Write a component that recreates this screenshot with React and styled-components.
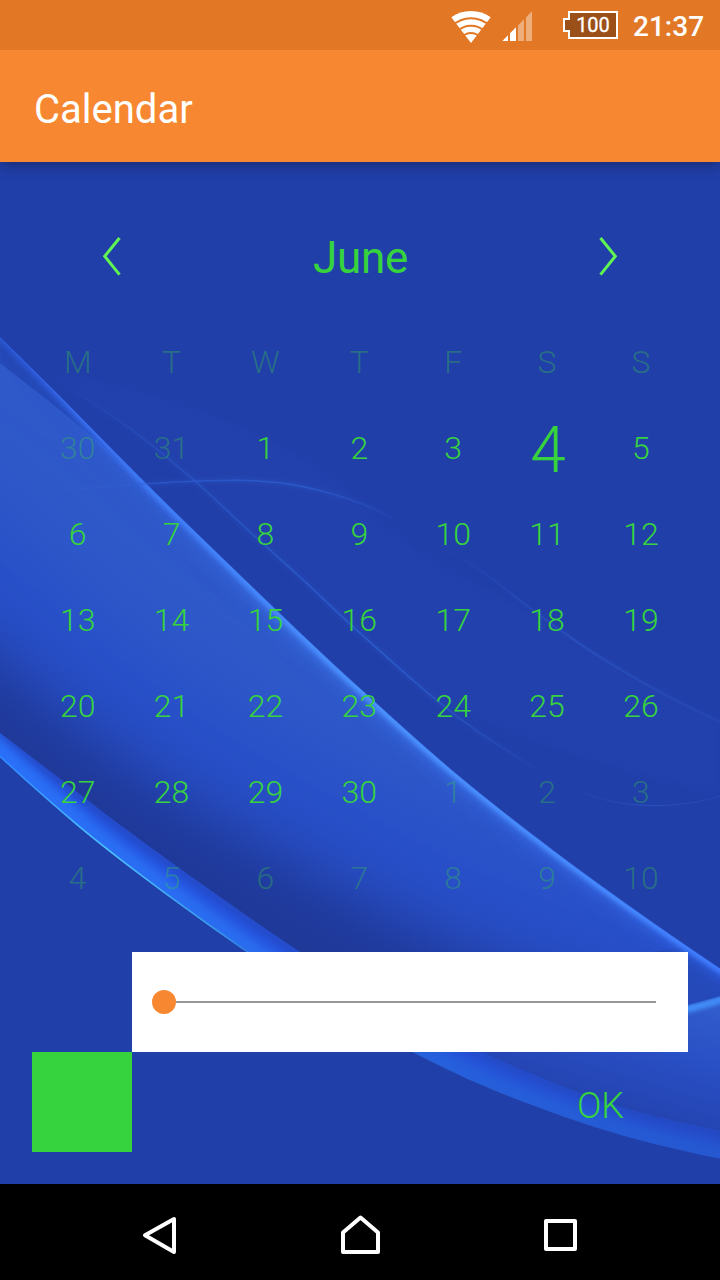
import React from "react";
import styled, { createGlobalStyle } from "styled-components";

const green = "#37d33e";

const GlobalStyle = createGlobalStyle`
  *, *::before, *::after { box-sizing: border-box; }
  body { margin: 0; background: #213fa9; }
  button { padding: 0; border: 0; background: none; color: inherit; font: inherit; }
  svg { display: block; }
`;

const Screen = styled.div`
  width: 720px;
  height: 1280px;
  display: flex;
  flex-direction: column;
  overflow: hidden;
  font-family: Roboto, "Liberation Sans", sans-serif;
`;

const StatusBar = styled.header`
  flex: 0 0 50px;
  display: flex;
  align-items: center;
  justify-content: flex-end;
  padding-right: 16px;
  background: #e27826;
  color: #fff;
  z-index: 2;
`;

const SignalIcons = styled.svg`
  width: 84px;
  height: 34px;
  margin-right: 28px;
  margin-top: 4px;
`;

const Battery = styled.div`
  position: relative;
  display: flex;
  align-items: center;
  justify-content: center;
  width: 55px;
  height: 28px;
  padding-left: 5px;
  margin-right: 15px;
  font-size: 20px;
  line-height: 28px;
`;

const BatteryOutline = styled.svg`
  position: absolute;
  inset: 0;
  z-index: 0;
`;

const BatteryLevel = styled.span`
  position: relative;
  -webkit-text-stroke: 0.3px #fff;
`;

const Clock = styled.span`
  font-size: 28px;
  line-height: 34px;
  font-weight: 500;
  width: 71px;
  margin-top: 3px;
  white-space: nowrap;
`;

const AppBar = styled.div`
  flex: 0 0 112px;
  display: flex;
  align-items: center;
  padding: 8px 34px 0 34px;
  background: #f78831;
  box-shadow: 0 2px 14px rgba(0, 0, 0, 0.36);
  z-index: 1;
`;

const Title = styled.h1`
  margin: 0;
  color: #fff;
  font-size: 40px;
  line-height: 48px;
  font-weight: 400;
`;

const Main = styled.main`
  position: relative;
  flex: 0 0 1022px;
  display: flex;
  flex-direction: column;
  padding: 32px;
  background: #213fa9;
  color: ${green};
`;

const WallpaperSvg = styled.svg`
  position: absolute;
  inset: 0;
`;

const MonthBar = styled.div`
  position: relative;
  flex: 0 0 125px;
  display: flex;
  align-items: center;
  justify-content: space-between;
  padding: 0 64px;
`;

const ArrowButton = styled.button`
  width: 32px;
  height: 44px;
  padding-bottom: 2px;
  display: flex;
  align-items: center;
  justify-content: center;
`;

const MonthName = styled.h2`
  margin: 2px 0 0 1px;
  font-size: 44px;
  line-height: 52px;
  font-weight: 400;
  letter-spacing: -0.3px;
`;

const DayGrid = styled.div`
  position: relative;
  flex: 0 0 602px;
  width: 657px;
  margin-left: -1.2px;
  display: grid;
  grid-template-columns: repeat(7, 1fr);
  grid-auto-rows: 86px;
`;

const DayCell = styled.div`
  display: flex;
  align-items: center;
  justify-content: center;
  padding: ${(p) => (p.$selected ? "6px 0 0 2px" : 0)};
  font-size: ${(p) => (p.$selected ? 64 : 32)}px;
  font-weight: 300;
  line-height: 1;
  opacity: ${(p) => (p.$dim ? 0.32 : 1)};
`;

const SliderPanel = styled.div`
  position: relative;
  flex: 0 0 100px;
  margin: 31px 0 0 100px;
  padding: 0 32px 0 20px;
  background: #fff;
  display: flex;
  align-items: center;
`;

const Thumb = styled.span`
  flex: 0 0 24px;
  height: 24px;
  border-radius: 50%;
  background: #f78831;
`;

const Track = styled.span`
  flex: 1;
  height: 2px;
  background: #969696;
`;

const Footer = styled.div`
  position: relative;
  flex: 0 0 100px;
  display: flex;
  justify-content: space-between;
`;

const Swatch = styled.div`
  width: 100px;
  background: ${green};
`;

const OkButton = styled.button`
  width: 176px;
  padding: 7px 0 0 1px;
  font-size: 36px;
  font-weight: 300;
`;

const NavBar = styled.nav`
  flex: 0 0 96px;
  display: flex;
  justify-content: center;
  background: #000;
`;

const NavButton = styled.button`
  width: 200px;
  display: flex;
  align-items: center;
  justify-content: center;
  padding-top: 6px;
`;

// Smooth curve through a list of points.
const curve = (pts, start = "M") => {
  let d = `${start}${pts[0][0]} ${pts[0][1]}`;
  for (let i = 0; i < pts.length - 1; i++) {
    const p0 = pts[i - 1] || pts[i];
    const p1 = pts[i];
    const p2 = pts[i + 1];
    const p3 = pts[i + 2] || p2;
    d += ` C${p1[0] + (p2[0] - p0[0]) / 6} ${p1[1] + (p2[1] - p0[1]) / 6}`;
    d += ` ${p2[0] - (p3[0] - p1[0]) / 6} ${p2[1] - (p3[1] - p1[1]) / 6} ${p2[0]} ${p2[1]}`;
  }
  return d;
};

const crest = [[-60, 279], [0, 338], [60, 397], [143, 481], [200, 537], [306, 639], [360, 689], [457, 775], [552, 850], [640, 914], [720, 969], [780, 1008]];
const rimTop = [[-60, 686], [0, 733], [60, 779], [120, 825], [200, 883], [300, 952], [390, 1006], [482, 1052], [547, 1080], [620, 1107], [720, 1131], [790, 1144]];
const rimBottom = [[-50, 710], [0, 757], [50, 802], [100, 844], [167, 895], [247, 952], [330, 1007], [413, 1052], [475, 1082], [535, 1106], [595, 1127], [655, 1144], [720, 1158.5], [790, 1170]];
const midTone = [[-100, 450], [0, 520], [130, 635], [300, 745], [500, 840], [760, 940]];
const darkTone = [[-100, 585], [0, 657], [80, 724], [170, 788], [300, 864], [450, 942], [640, 1010], [800, 1050]];
const threadA = [[50, 377], [93, 403], [140, 436], [195, 481], [250, 532], [300, 577], [360, 633], [435, 699], [480, 733], [550, 778]];
const threadB = [[40, 492], [90, 488], [143, 484], [200, 481], [250, 480.5], [300, 486], [360, 503], [412, 528]];
const threadC = [[440, 545], [480, 570], [530, 608], [560, 630], [600, 657], [660, 692], [722, 723]];
const threadD = [[570, 788], [610, 801], [650, 805.5], [690, 803], [722, 796]];
const veil = [[60, 374], [130, 388], [200, 410], [270, 440], [330, 475], [380, 520], [440, 565], [530, 612]];

const reversed = (pts) => [...pts].reverse();
const sheetPath = `${curve(crest)} ${curve(reversed(rimTop), "L")}Z`;
const rimPath = `${curve(rimTop)} ${curve(reversed(rimBottom), "L")}Z`;

const Fade = ({ id, x1, x2, stops }) => (
  <linearGradient id={id} gradientUnits="userSpaceOnUse" x1={x1} x2={x2} y1="0" y2="0">
    {stops.map(([offset, color, opacity = 1]) => (
      <stop key={offset} offset={offset} stopColor={color} stopOpacity={opacity} />
    ))}
  </linearGradient>
);

const Blur = ({ id, amount }) => (
  <filter id={id} filterUnits="userSpaceOnUse" x="-200" y="100" width="1120" height="1400" colorInterpolationFilters="sRGB">
    <feGaussianBlur stdDeviation={amount} />
  </filter>
);

const Wallpaper = () => (
  <WallpaperSvg width="720" height="1022" viewBox="0 162 720 1022" fill="none" aria-hidden="true">
    <defs>
      <clipPath id="sheet"><path d={sheetPath} /></clipPath>
      <clipPath id="rim"><path d={rimPath} /></clipPath>
      <Fade id="crestGlow" x1="0" x2="720" stops={[[0, "#2f62f0", 0], [0.15, "#3a6cf0", 0.4], [0.4, "#4280f6"], [0.85, "#3c70f0"], [1, "#3265f0"]]} />
      <Fade id="crestLine" x1="0" x2="720" stops={[[0, "#3468f8", 0.3], [0.2, "#4080ff", 0.9], [0.5, "#4c94ff"], [0.85, "#478cff"], [1, "#3f7cff"]]} />
      <Fade id="crestEdge" x1="0" x2="720" stops={[[0, "#3468f8"], [0.2, "#4080ff"], [0.5, "#4c94ff"], [1, "#3f7cff"]]} />
      <Fade id="rimFill" x1="0" x2="720" stops={[[0, "#2454e0"], [0.45, "#2654e0"], [0.7, "#2552d8"], [1, "#264dcc"]]} />
      <Fade id="rimGlow" x1="0" x2="720" stops={[[0, "#2a70f8"], [0.35, "#2a6cee"], [0.6, "#2660dc"], [1, "#2558d0"]]} />
      <Fade id="rimEdge" x1="0" x2="720" stops={[[0, "#2f88ff"], [0.15, "#4cc4ff"], [0.3, "#3a98e8"], [0.4, "#2a68d0", 0.5], [1, "#2658cc", 0]]} />
      <Fade id="fadeA" x1="50" x2="550" stops={[[0, "#2b5ccc", 0], [0.3, "#2b5ccc", 0.65], [0.65, "#2b60d0", 0.9], [0.8, "#2b5ccc", 0.7], [1, "#2b5ccc", 0]]} />
      <Fade id="fadeB" x1="40" x2="412" stops={[[0, "#3564d4", 0], [0.35, "#2c5cd0", 0.7], [0.7, "#2c5ccc", 0.9], [1, "#2b58c8", 0]]} />
      <Fade id="fadeC" x1="440" x2="720" stops={[[0, "#2a55c4", 0], [0.5, "#2a55c4", 0.8], [1, "#2a55c4", 0.35]]} />
      <Fade id="fadeD" x1="570" x2="720" stops={[[0, "#2a55c4", 0], [0.5, "#2a55c4", 0.8], [1, "#2a55c4", 0.4]]} />
      <linearGradient id="foldFill" gradientUnits="userSpaceOnUse" x1="690" x2="655" y1="1000" y2="1115">
        <stop offset="0" stopColor="#315ccc" />
        <stop offset="0.5" stopColor="#294fc4" />
        <stop offset="1" stopColor="#2444b2" />
      </linearGradient>
      <Blur id="blur1" amount="0.7" />
      <Blur id="blur2" amount="2" />
      <Blur id="blur5" amount="5" />
      <Blur id="blur10" amount="10" />
      <Blur id="blur30" amount="30" />
      <Blur id="blur36" amount="36" />
    </defs>

    <path d={`${curve(veil)} L600 655 L660 690 L720 722 L720 795 L640 775 L560 750 L480 720 ${curve(reversed(threadA.slice(0, 8)), "L")}Z`} fill="#2341ac" filter="url(#blur5)" />
    <path d={curve(threadA)} stroke="url(#fadeA)" strokeWidth="5" opacity="0.3" filter="url(#blur2)" />
    <path d={curve(threadA)} stroke="url(#fadeA)" strokeWidth="1.4" />
    <path d={curve(threadC)} stroke="url(#fadeC)" strokeWidth="4" opacity="0.3" filter="url(#blur1)" />
    <path d={curve(threadC)} stroke="url(#fadeC)" strokeWidth="1.1" />
    <path d={curve(threadD)} stroke="url(#fadeD)" strokeWidth="1.2" />

    <path d={sheetPath} fill="#2f59c9" />
    <g clipPath="url(#sheet)">
      <path d={`${curve(midTone)} V1350 H-100Z`} fill="#284fc8" filter="url(#blur36)" />
      <path d={`${curve(darkTone)} V1350 H-100Z`} fill="#1f3999" filter="url(#blur30)" />
      <path d="M-5 330 L-5 359 L50 402 L100 443 L145 488 Z" fill="#2549b6" />
      <path d="M400 1052 L560 1030 Q680 1012 730 994 L740 1170 L440 1130Z" fill="url(#foldFill)" />
      <path d="M600 1028 Q680 1013 730 997" stroke="#4390fa" strokeWidth="7" filter="url(#blur2)" />
      <path d="M600 1023 Q680 1009 730 993 V940 L600 960Z" fill="#2549b8" />
      <path d={curve(crest)} stroke="url(#crestGlow)" strokeWidth="22" filter="url(#blur10)" opacity="0.3" />
      <path d={curve(crest)} stroke="url(#crestGlow)" strokeWidth="14" filter="url(#blur5)" opacity="0.5" />
      <path d={curve(crest)} stroke="url(#crestLine)" strokeWidth="8" filter="url(#blur2)" />
    </g>
    <path d={curve(crest)} stroke="url(#crestEdge)" strokeWidth="1.2" opacity="0.6" />

    <path d={rimPath} fill="url(#rimFill)" />
    <g clipPath="url(#rim)">
      <path d={curve(rimTop)} stroke="#2448c0" strokeWidth="9" filter="url(#blur5)" />
      <path d={curve(rimBottom)} stroke="url(#rimGlow)" strokeWidth="28" filter="url(#blur5)" />
      <path d={curve(rimBottom)} stroke="url(#rimEdge)" strokeWidth="2.4" filter="url(#blur1)" />
    </g>
    <path d={curve(rimBottom)} stroke="url(#rimEdge)" strokeWidth="0.8" />

    <path d={curve(threadB)} stroke="url(#fadeB)" strokeWidth="5" opacity="0.35" filter="url(#blur2)" />
    <path d={curve(threadB)} stroke="url(#fadeB)" strokeWidth="1.4" />
  </WallpaperSvg>
);

const Chevron = ({ d }) => (
  <svg width="20" height="40" viewBox="0 0 20 40" fill="none" stroke="#5ff552" strokeWidth="3" strokeLinejoin="miter">
    <path d={d} />
  </svg>
);

const NavIcon = ({ children }) => (
  <svg width="48" height="48" viewBox="0 0 48 48" fill="none" stroke="#fff" strokeWidth="4" strokeLinejoin="round">
    {children}
  </svg>
);

const weekdays = ["M", "T", "W", "T", "F", "S", "S"];
const days = [
  { day: 30, dim: true },
  { day: 31, dim: true },
  ...Array.from({ length: 30 }, (_, i) => ({ day: i + 1, selected: i === 3 })),
  ...Array.from({ length: 10 }, (_, i) => ({ day: i + 1, dim: true })),
];

export default function App() {
  return (
    <Screen>
      <GlobalStyle />
      <StatusBar>
        <SignalIcons viewBox="451 10 84 34">
          <path d="M471 43 L451.3 17.3 A34 34 0 0 1 490.7 17.3Z" fill="#fff" />
          <g fill="none" stroke="#e27826" strokeWidth="1.9">
            <circle cx="471" cy="45" r="26.8" />
            <circle cx="471" cy="45" r="19.3" />
            <circle cx="471" cy="45" r="12" />
          </g>
          <path d="M502.3 41 L508 35.3 V41Z M510 41 V33.3 L516 27.3 V41Z" fill="#fff" />
          <path d="M518 41 V25.3 L524 19.3 V41Z M526 41 V17.3 L532 11.3 V41Z" fill="#fff" opacity="0.4" />
        </SignalIcons>
        <Battery>
          <BatteryOutline width="55" height="28" viewBox="0 0 55 28">
            <path d="M6 1 H54 V27 H6 V20 H1 V8 H6Z" fill="#9c5019" stroke="#fff" strokeWidth="2" />
          </BatteryOutline>
          <BatteryLevel>100</BatteryLevel>
        </Battery>
        <Clock>21:37</Clock>
      </StatusBar>

      <AppBar>
        <Title>Calendar</Title>
      </AppBar>

      <Main>
        <Wallpaper />
        <MonthBar>
          <ArrowButton aria-label="Previous month">
            <Chevron d="M17.5 2 L2.7 20.3 L17.5 38.6" />
          </ArrowButton>
          <MonthName>June</MonthName>
          <ArrowButton aria-label="Next month">
            <Chevron d="M2.5 2 L17.3 20.3 L2.5 38.6" />
          </ArrowButton>
        </MonthBar>
        <DayGrid>
          {weekdays.map((name, i) => (
            <DayCell key={`w${i}`} $dim>{name}</DayCell>
          ))}
          {days.map(({ day, dim, selected }, i) => (
            <DayCell key={i} $dim={dim} $selected={selected}>{day}</DayCell>
          ))}
        </DayGrid>
        <SliderPanel>
          <Thumb />
          <Track />
        </SliderPanel>
        <Footer>
          <Swatch />
          <OkButton>OK</OkButton>
        </Footer>
      </Main>

      <NavBar>
        <NavButton aria-label="Back">
          <NavIcon><path d="M9 24.3 L38 8 V41Z" /></NavIcon>
        </NavButton>
        <NavButton aria-label="Home">
          <NavIcon><path d="M24.5 6.5 L42 21.5 V41 H7 V21.5Z" /></NavIcon>
        </NavButton>
        <NavButton aria-label="Recent apps">
          <NavIcon><rect x="10" y="10" width="29" height="28" /></NavIcon>
        </NavButton>
      </NavBar>
    </Screen>
  );
}
